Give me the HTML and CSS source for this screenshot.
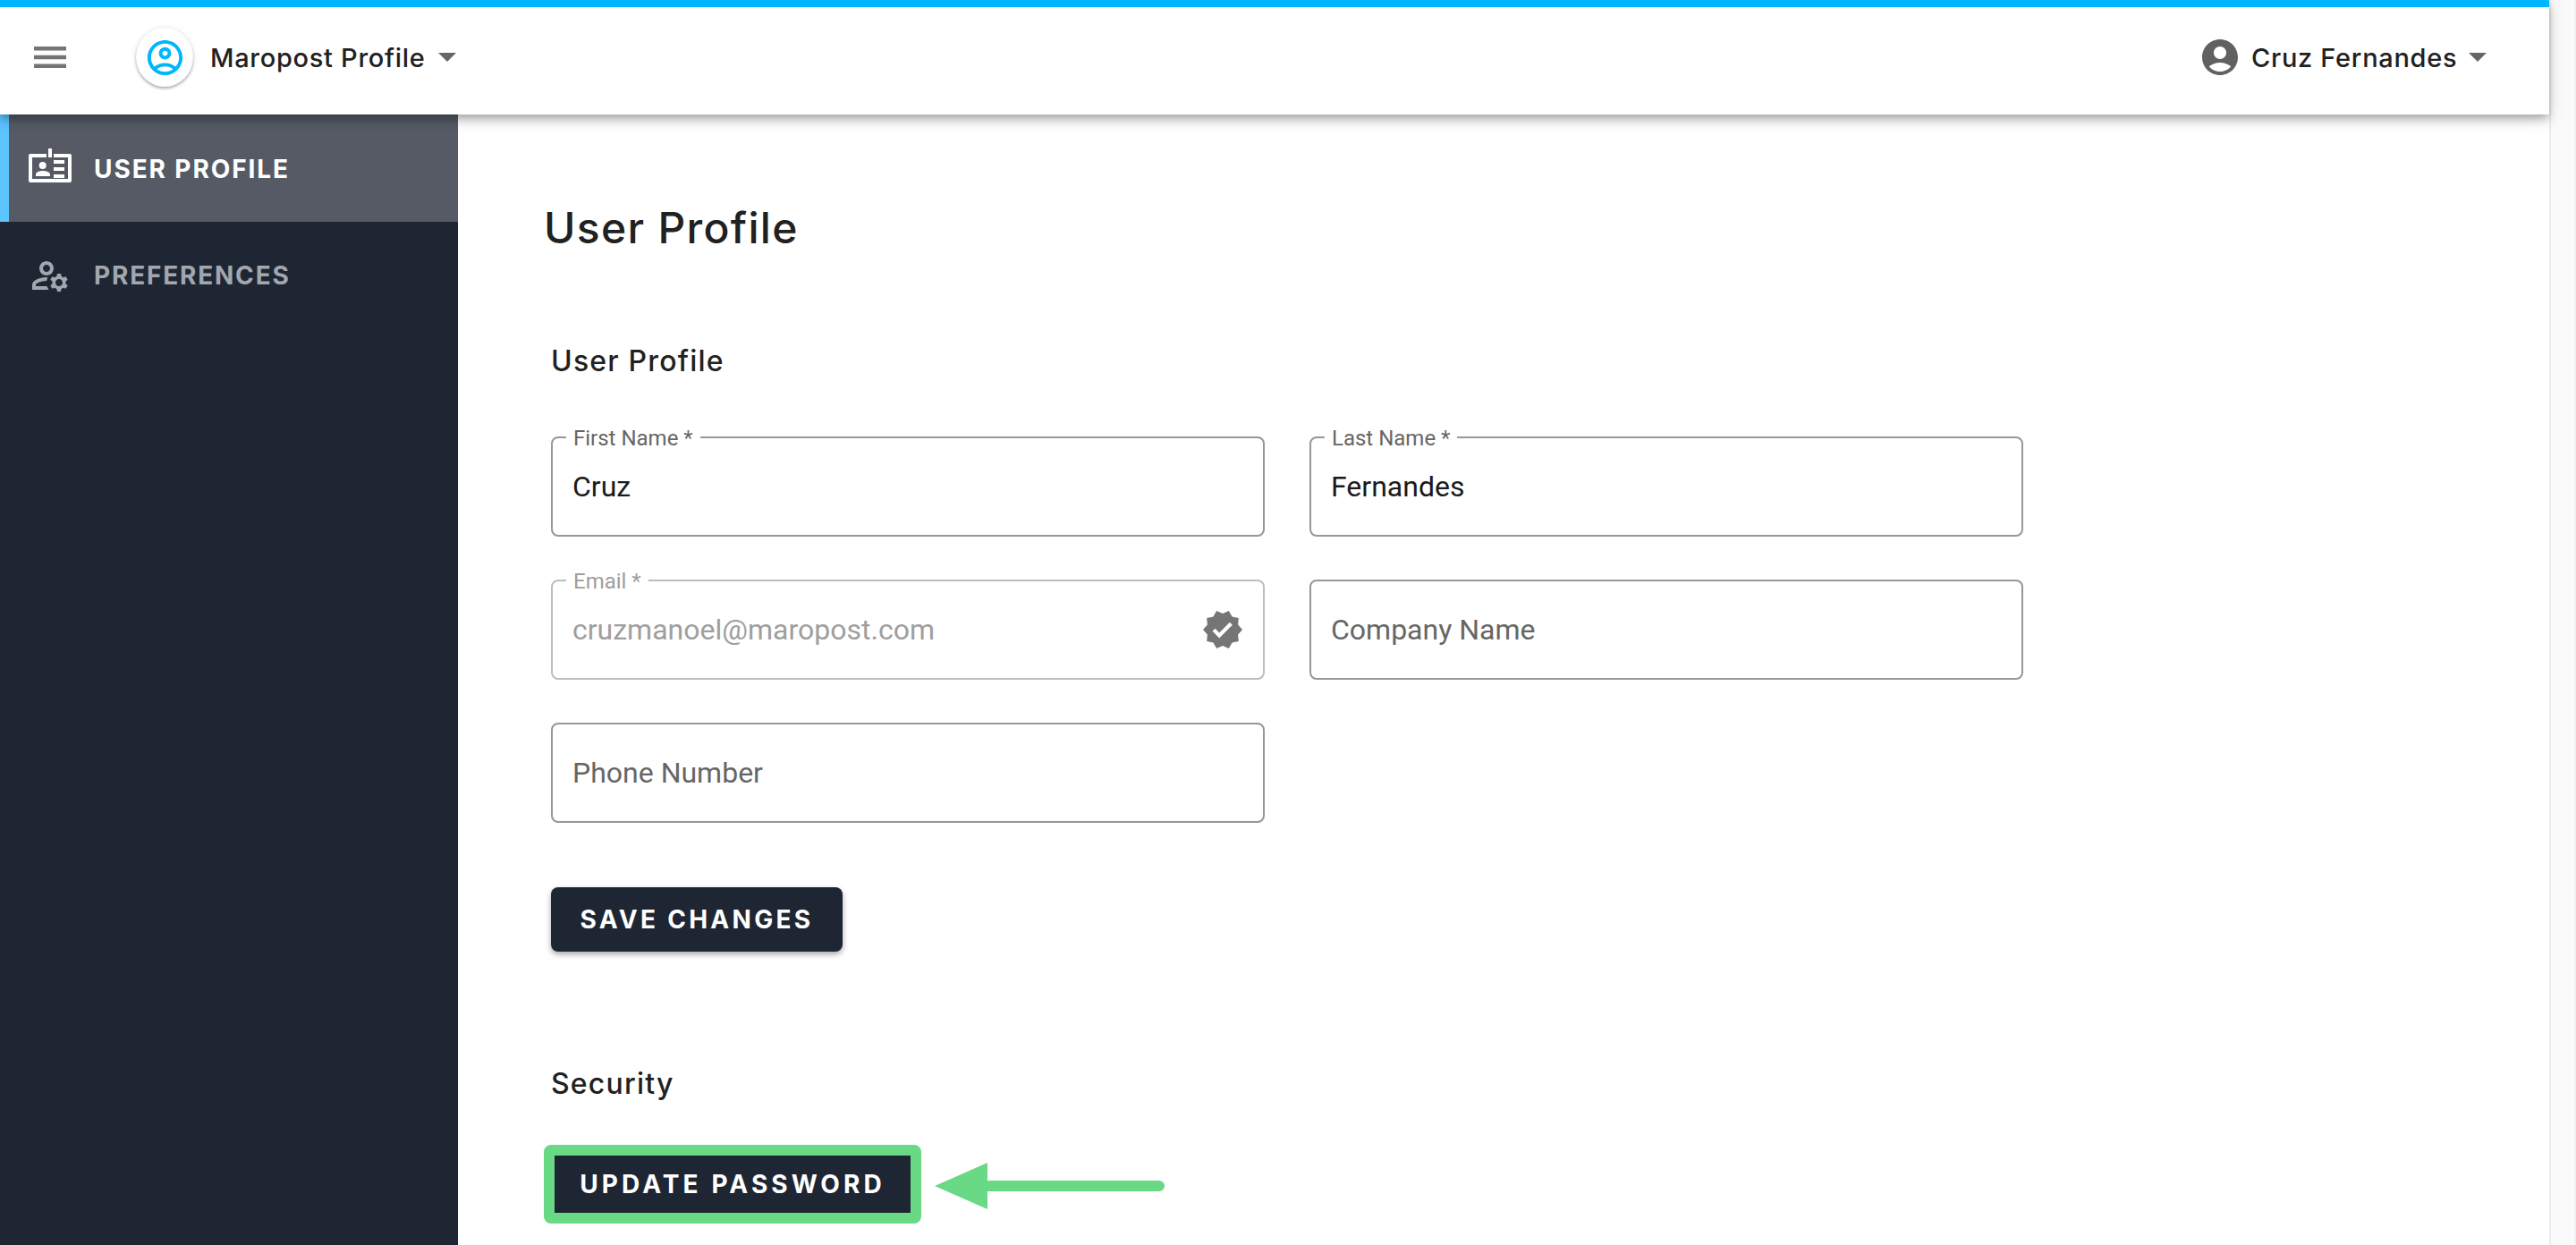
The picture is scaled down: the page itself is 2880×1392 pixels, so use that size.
FILE: index.html
```html
<!DOCTYPE html>
<html lang="en">
<head>
<meta charset="utf-8">
<title>User Profile</title>
<link rel="stylesheet" href="styles.css">
</head>
<body>
<div class="app">
  <div class="page">
    <header class="topbar">
      <div class="topbar-left">
        <svg class="hamburger" viewBox="0 0 36 24"><path d="M0 0h36v4.5H0zM0 9.75h36v4.5H0zM0 19.5h36V24H0z"/></svg>
        <span class="logo">
          <svg viewBox="0 0 24 24"><path d="M12 2C6.48 2 2 6.48 2 12s4.48 10 10 10 10-4.48 10-10S17.52 2 12 2zM7.35 18.5C8.66 17.56 10.26 17 12 17s3.34.56 4.65 1.5C15.34 19.44 13.74 20 12 20s-3.34-.56-4.65-1.5zm10.79-1.38C16.45 15.8 14.32 15 12 15s-4.45.8-6.14 2.12C4.7 15.73 4 13.95 4 12c0-4.42 3.58-8 8-8s8 3.58 8 8c0 1.95-.7 3.73-1.86 5.12zM12 6c-1.93 0-3.5 1.57-3.5 3.5S10.07 13 12 13s3.5-1.57 3.5-3.5S13.93 6 12 6zm0 5c-.83 0-1.5-.67-1.5-1.5S11.17 8 12 8s1.5.67 1.5 1.5S12.83 11 12 11z"/></svg>
        </span>
        <span class="topbar-text app-name">Maropost Profile</span>
        <span class="caret"></span>
      </div>
      <div class="topbar-right">
        <svg class="user-icon" viewBox="0 0 24 24"><path d="M12 2C6.48 2 2 6.48 2 12s4.48 10 10 10 10-4.48 10-10S17.52 2 12 2zm0 4c1.93 0 3.5 1.57 3.5 3.5S13.93 13 12 13s-3.5-1.57-3.5-3.5S10.07 6 12 6zm0 14c-2.03 0-4.43-.82-6.14-2.88C7.55 15.8 9.68 15 12 15s4.45.8 6.14 2.12C16.43 19.18 14.03 20 12 20z"/></svg>
        <span class="topbar-text user-name">Cruz Fernandes</span>
        <span class="caret"></span>
      </div>
    </header>
    <div class="body">
      <nav class="sidebar">
        <a class="nav-item active">
          <svg class="nav-icon" viewBox="0 0 48 48">
            <path d="M2 8h18v4H4v24h40V12H28V8h18a2 2 0 0 1 2 2v28a2 2 0 0 1-2 2H2a2 2 0 0 1-2-2V10a2 2 0 0 1 2-2z"/>
            <path d="M22 2h4v10h-4z"/>
            <circle cx="15.7" cy="21" r="4"/>
            <path d="M8 33v-2c0-2.6 4.6-4 7.8-4s8.2 1.4 8.2 4v2z"/>
            <path d="M28 15h12v4H28zM28 23h12v4H28zM28 31h12v4H28z"/>
          </svg>
          <span>USER PROFILE</span>
        </a>
        <a class="nav-item">
          <svg class="nav-icon" viewBox="0 0 24 24"><path d="M4 18v-.65c0-.34.16-.66.41-.81C6.1 15.53 8.03 15 10 15c.03 0 .05 0 .08.01.1-.7.3-1.37.59-1.98-.22-.02-.44-.03-.67-.03-2.42 0-4.68.67-6.61 1.82-.88.52-1.39 1.5-1.39 2.53V20h9.26c-.42-.6-.75-1.28-.97-2H4zM10 12c2.21 0 4-1.79 4-4s-1.79-4-4-4-4 1.79-4 4 1.79 4 4 4zm0-6c1.1 0 2 .9 2 2s-.9 2-2 2-2-.9-2-2 .9-2 2-2zM20.75 16c0-.22-.03-.42-.06-.63l1.14-1.01-1-1.73-1.45.49c-.32-.27-.68-.48-1.08-.63L18 11h-2l-.3 1.49c-.4.15-.76.36-1.08.63l-1.45-.49-1 1.73 1.14 1.01c-.03.21-.06.41-.06.63s.03.42.06.63l-1.14 1.01 1 1.73 1.45-.49c.32.27.68.48 1.08.63L16 21h2l.3-1.49c.4-.15.76-.36 1.08-.63l1.45.49 1-1.73-1.14-1.01c.03-.21.06-.41.06-.63zM17 18c-1.1 0-2-.9-2-2s.9-2 2-2 2 .9 2 2-.9 2-2 2z"/></svg>
          <span>PREFERENCES</span>
        </a>
      </nav>
      <main class="content">
        <h1 class="page-title">User Profile</h1>
        <section class="section">
          <h2 class="section-title">User Profile</h2>
          <div class="fields">
            <div class="field">
              <span class="field-label">First Name *</span>
              <span class="field-value">Cruz</span>
            </div>
            <div class="field">
              <span class="field-label">Last Name *</span>
              <span class="field-value">Fernandes</span>
            </div>
            <div class="field disabled">
              <span class="field-label">Email *</span>
              <span class="field-value">cruzmanoel@maropost.com</span>
              <svg class="verified" viewBox="0 0 24 24"><path d="M23 12l-2.44-2.79.34-3.69-3.61-.82-1.89-3.2L12 2.96 8.6 1.5 6.71 4.69 3.1 5.5l.34 3.7L1 12l2.44 2.79-.34 3.7 3.61.82L8.6 22.5l3.4-1.47 3.4 1.46 1.89-3.19 3.61-.82-.34-3.69L23 12zm-12.91 4.72l-3.8-3.81 1.48-1.48 2.32 2.33 5.85-5.87 1.48 1.48-7.33 7.35z"/></svg>
            </div>
            <div class="field">
              <span class="field-value placeholder">Company Name</span>
            </div>
            <div class="field">
              <span class="field-value placeholder">Phone Number</span>
            </div>
          </div>
          <button class="btn save" type="button">SAVE CHANGES</button>
        </section>
        <section class="section security">
          <h2 class="section-title">Security</h2>
          <div class="callout">
            <div class="highlight">
              <button class="btn update" type="button">UPDATE PASSWORD</button>
            </div>
            <svg class="arrow" viewBox="0 0 257 52"><path d="M0 26 59 0v20h192a6 6 0 0 1 0 12H59v20z"/></svg>
          </div>
        </section>
      </main>
    </div>
  </div>
  <div class="scrollbar"></div>
</div>
</body>
</html>
```

FILE: styles.css
```css
* { box-sizing: border-box; }
html, body { margin: 0; height: 100%; overflow: hidden; background: #fff; }
body { font-family: Inter, "Noto Sans", sans-serif; color: #212121; }

.app { display: flex; width: 2880px; height: 1392px; }
.page { flex: 1; min-width: 0; display: flex; flex-direction: column; }
.scrollbar { width: 30px; background: #fafafa; border-left: 2px solid #ececec; border-right: 2px solid #f0f0f0; }

.topbar {
  position: relative; z-index: 2;
  height: 128px; flex: none;
  display: flex; align-items: center; justify-content: space-between;
  background: #fff; border-top: 8px solid #00b6ff;
  padding: 0 70px 8px 38px;
  box-shadow: 0 4px 8px -2px rgba(0,0,0,.2), 0 8px 10px 0 rgba(0,0,0,.14), 0 2px 20px 0 rgba(0,0,0,.12);
}
.topbar-left, .topbar-right { display: flex; align-items: center; }
.hamburger { width: 36px; height: 24px; fill: #757575; margin-right: 78px; }
.logo {
  width: 64px; height: 66px; border-radius: 50%;
  display: flex; align-items: center; justify-content: center;
  background: #fff;
  box-shadow: 0 2px 3px rgba(0,0,0,.28), 0 0 6px rgba(0,0,0,.1);
  margin-right: 19px;
}
.logo svg { width: 47px; height: 47px; fill: #00b6ff; }
.topbar-text { font-size: 29px; font-weight: 500; letter-spacing: .7px; color: #212121; }
.app-name { width: 255px; }
.user-name { width: 243px; }
.caret { width: 0; height: 0; border-left: 10px solid transparent; border-right: 10px solid transparent; border-top: 10px solid #666; }
.user-icon { width: 48px; height: 48px; fill: #616161; margin-right: 11px; }

.body { flex: 1; min-height: 0; display: flex; }
.sidebar { width: 512px; flex: none; background: #1e2533; }
.nav-item {
  display: flex; align-items: center; gap: 25px;
  height: 120px; padding-left: 32px;
  font-size: 28px; font-weight: 700; letter-spacing: 1.8px; color: #a2a6ae;
}
.nav-item.active { background: #555a65; color: #fff; border-left: 10px solid #5cc4ff; padding-left: 22px; }
.nav-item.active span { padding-top: 2px; letter-spacing: 1.9px; }
.nav-icon { width: 48px; height: 48px; fill: currentColor; flex: none; }

.content { flex: 1; min-width: 0; padding: 97px 0 0 96px; }
.page-title { margin: 0 0 99px; font-size: 48px; line-height: 60px; font-weight: 500; letter-spacing: 1.3px; color: #212121; }
.section { padding-left: 8px; }
.section-title { margin: 0 0 64px; font-size: 32px; line-height: 40px; font-weight: 500; letter-spacing: 1.2px; color: #212121; }
.fields { display: grid; grid-template-columns: 798px 798px; column-gap: 50px; row-gap: 48px; }
.field {
  position: relative; height: 112px;
  display: flex; align-items: center;
  border: 2px solid #979797; border-radius: 8px;
  padding: 0 22px;
  font-family: Roboto, sans-serif;
}
.field-label {
  position: absolute; left: 15px; top: -14px;
  padding: 0 8px; background: #fff;
  font-size: 24px; line-height: 28px; color: #666;
}
.field-value { font-size: 32px; color: #1a1a1a; }
.field-value.placeholder { color: #666; }
.field.disabled { border-color: #bdbdbd; }
.field.disabled .field-label, .field.disabled .field-value { color: #9e9e9e; }
.verified { position: absolute; right: 21px; top: 30px; width: 48px; height: 48px; fill: #757575; }

.btn {
  display: block; border: 0; margin: 0;
  background: #1e2533; color: #fff;
  font-family: Inter, "Noto Sans", sans-serif;
  font-size: 28px; font-weight: 700; letter-spacing: 3.3px;
}
.save { width: 326px; height: 72px; margin-top: 72px; border-radius: 8px; box-shadow: 0 3px 6px rgba(0,0,0,.35); }
.security { padding-top: 128px; }
.security .section-title { margin-bottom: 48px; }
.callout { display: flex; align-items: center; gap: 15px; margin-left: -8px; }
.highlight { border: 12px solid #69d985; border-radius: 8px; }
.update { width: 398px; height: 64px; letter-spacing: 4.1px; }
.arrow { width: 257px; height: 52px; fill: #69d985; margin-top: 4px; }
```
